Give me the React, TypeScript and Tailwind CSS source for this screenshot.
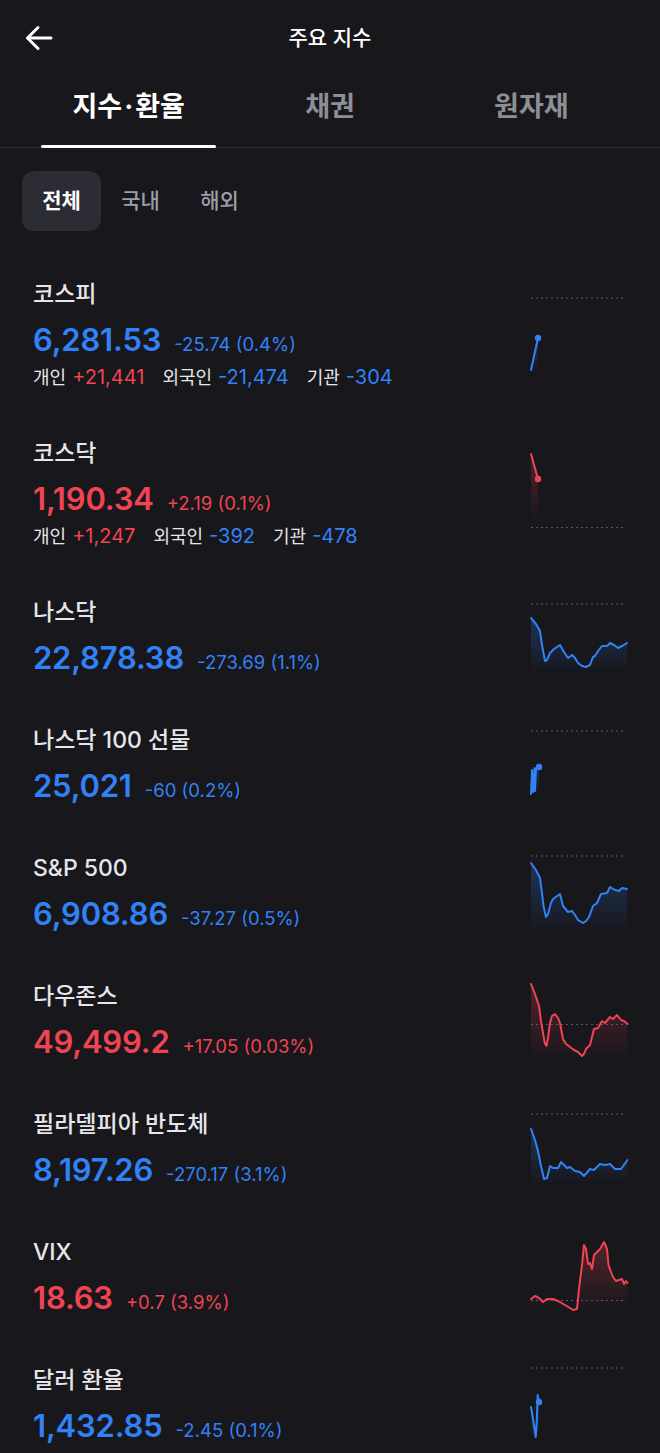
import React from "react";

const BLUE = "#3182f6";
const RED = "#f04452";

type Chart = {
  dash: number;
  pts: number[][];
  dot?: boolean;
  bottom: number;
};

type Item = {
  name: string;
  price: string;
  change: string;
  up: boolean;
  sub?: [string, string, boolean][];
  chart: Chart;
};

const items: Item[] = [
  {
    name: "코스피",
    price: "6,281.53",
    change: "-25.74 (0.4%)",
    up: false,
    sub: [
      ["개인", "+21,441", true],
      ["외국인", "-21,474", false],
      ["기관", "-304", false],
    ],
    chart: { dash: 19, pts: [[3, 91], [10, 59]], dot: true, bottom: 92 },
  },
  {
    name: "코스닥",
    price: "1,190.34",
    change: "+2.19 (0.1%)",
    up: true,
    sub: [
      ["개인", "+1,247", true],
      ["외국인", "-392", false],
      ["기관", "-478", false],
    ],
    chart: { dash: 89.5, pts: [[3, 16], [10, 41]], dot: true, bottom: 84 },
  },
  {
    name: "나스닥",
    price: "22,878.38",
    change: "-273.69 (1.1%)",
    up: false,
    chart: {
      dash: 7,
      pts: [[3, 21], [8, 27], [12, 34], [14, 48], [17, 64], [19, 63], [22, 56], [26, 52], [32, 48], [36, 55], [40, 61], [44, 58], [47, 61], [50, 66], [54, 69], [58, 70], [62, 68], [65, 60], [67, 59], [70, 54], [74, 49], [79, 49], [82, 46], [86, 48], [90, 51], [94, 49], [99, 46]],
      bottom: 76,
    },
  },
  {
    name: "나스닥 100 선물",
    price: "25,021",
    change: "-60 (0.2%)",
    up: false,
    chart: {
      dash: 6,
      pts: [[3, 69], [4, 45], [5, 67], [6.5, 43], [7, 66], [8, 44], [9.5, 42], [11, 42]],
      dot: true,
      bottom: 70,
    },
  },
  {
    name: "S&P 500",
    price: "6,908.86",
    change: "-37.27 (0.5%)",
    up: false,
    chart: {
      dash: 3,
      pts: [[3, 10], [8, 17], [12, 25], [14, 40], [15.5, 53], [18, 64], [20, 61], [23, 50], [25, 46], [32, 41], [35, 53], [40, 59], [44, 58], [47, 62], [50, 67], [55, 70], [58, 68], [61, 64], [65, 53], [69, 50], [73, 41], [79, 40], [82, 34], [87, 37], [91, 38], [94, 35], [99, 36]],
      bottom: 80,
    },
  },
  {
    name: "다우존스",
    price: "49,499.2",
    change: "+17.05 (0.03%)",
    up: true,
    chart: {
      dash: 43.5,
      pts: [[3, 3], [7, 13], [11, 25], [13, 40], [15.5, 55], [17, 63], [18.5, 65], [20, 57], [22, 42], [24, 35], [27, 33], [30, 37], [32, 42], [35, 58], [38, 63], [42, 66], [46, 69], [50, 71], [54, 75], [56, 73], [58, 68], [62, 64], [64, 56], [66, 48], [70, 47], [74, 40], [77, 42], [82, 36], [85, 38], [89, 34], [93, 39], [96, 40], [99.5, 43]],
      bottom: 80,
    },
  },
  {
    name: "필라델피아 반도체",
    price: "8,197.26",
    change: "-270.17 (3.1%)",
    up: false,
    chart: {
      dash: 5,
      pts: [[3, 20], [7, 31], [10, 42], [13, 57], [16, 70], [19, 69], [22, 57], [25, 59], [30, 59], [33, 53], [39, 59], [42, 58], [47, 62], [52, 63], [56, 67], [62, 60], [66, 61], [72, 55], [77, 56], [82, 55], [87, 60], [93, 60], [99.5, 51]],
      bottom: 76,
    },
  },
  {
    name: "VIX",
    price: "18.63",
    change: "+0.7 (3.9%)",
    up: true,
    chart: {
      dash: 63.5,
      pts: [[3, 62], [7, 59], [11, 61], [15, 65], [19, 62], [25, 62], [30, 64], [37, 68], [42, 71], [45, 73], [49, 72], [51, 52], [54, 28], [56, 8], [58, 12], [60, 27], [62, 26], [64, 32], [66, 18], [69, 15], [72, 12], [76, 5], [79, 12], [80.5, 28], [83, 35], [85, 40], [88, 44], [91, 43], [94, 42], [96, 47], [98, 44], [99.5, 46]],
      bottom: 74,
    },
  },
  {
    name: "달러 환율",
    price: "1,432.85",
    change: "-2.45 (0.1%)",
    up: false,
    chart: {
      dash: 3,
      pts: [[3, 42], [5.5, 57], [7.7, 72], [8.7, 57], [9.7, 30], [11, 37]],
      dot: true,
      bottom: 74,
    },
  },
];

function Spark({ chart, color, id, h }: { chart: Chart; color: string; id: string; h: number }) {
  const line = chart.pts.map((p) => p.join(",")).join(" ");
  const first = chart.pts[0];
  const last = chart.pts[chart.pts.length - 1];
  const fill = `M${first[0]},${chart.bottom} L${line.replace(/ /g, " L")} L${last[0]},${chart.bottom} Z`;
  return (
    <svg width="100" height={h} viewBox={`0 0 100 ${h}`} overflow="visible" className="shrink-0 self-start">
      <defs>
        <linearGradient id={id} x1="0" y1="0" x2="0" y2="1">
          <stop offset="0%" stopColor={color} stopOpacity="0.28" />
          <stop offset="100%" stopColor={color} stopOpacity="0" />
        </linearGradient>
      </defs>
      <line x1="3" x2="98" y1={chart.dash} y2={chart.dash} stroke="#5a5a62" strokeWidth="1" strokeDasharray="2 3" />
      <path d={fill} fill={`url(#${id})`} />
      <polyline points={line} fill="none" stroke={color} strokeWidth="2" strokeLinejoin="round" strokeLinecap="round" />
      {chart.dot && <circle cx={last[0]} cy={last[1]} r="3.2" fill={color} />}
    </svg>
  );
}

function Row({ item, idx }: { item: Item; idx: number }) {
  const c = item.up ? RED : BLUE;
  return (
    <div className={`flex pl-[33px] pr-[32px] pt-[23px] ${item.sub ? "pb-[25px]" : "pb-[24px]"}`}>
      <div className="flex-1 min-w-0">
        <div className="text-[23px] leading-[30px] font-medium text-[#e6e6ea]">{item.name}</div>
        <div className="mt-[11px] flex items-baseline gap-[13px] h-[40px]">
          <span className="text-[31px] leading-[40px] font-semibold tracking-[-0.2px]" style={{ color: c }}>
            {item.price}
          </span>
          <span className="text-[18.5px] leading-[40px]" style={{ color: c }}>
            {item.change}
          </span>
        </div>
        {item.sub && (
          <div className="mt-[5px] flex items-baseline gap-[18px] leading-[24px]">
            {item.sub.map(([k, v, up]) => (
              <span key={k} className="flex items-baseline gap-[6px]">
                <span className="text-[18px] text-[#e6e6ea]">{k}</span>
                <span className={`text-[20px] ${up ? "text-[#f04452]" : "text-[#3182f6]"}`}>{v}</span>
              </span>
            ))}
          </div>
        )}
      </div>
      <Spark chart={item.chart} color={c} id={`g${idx}`} h={item.sub ? 110 : 81} />
    </div>
  );
}

export default function App() {
  return (
    <div className="min-h-screen w-full bg-[#17171c] text-white font-[Inter,'Noto_Sans_CJK_KR',sans-serif]">
      {/* top bar */}
      <div className="h-[76px] grid grid-cols-[1fr_auto_1fr] items-center">
        <div className="pl-[25px] flex items-center">
          <svg width="28" height="26" viewBox="0 0 28 26" fill="none" stroke="white" strokeWidth="3" strokeLinecap="round" strokeLinejoin="round">
            <path d="M26 13H3" />
            <path d="M13 2.5L2.5 13L13 23.5" />
          </svg>
        </div>
        <div className="text-[21px] font-medium">주요 지수</div>
        <div />
      </div>

      {/* tabs */}
      <div className="grid grid-cols-3 gap-[26px] px-[41px] border-b border-[#2a2a30]">
        {[["지수", "환율"], ["채권"], ["원자재"]].map((t, i) => (
          <div key={i} className="relative h-[71px] pb-[9px] flex items-center justify-center">
            <span className={`text-[27px] font-bold ${i === 0 ? "text-white" : "text-[#8e8e95]"}`}>
              {t.length > 1 ? (
                <>
                  {t[0]}
                  <span className="mx-[2px]">·</span>
                  {t[1]}
                </>
              ) : (
                t[0]
              )}
            </span>
            {i === 0 && <div className="absolute left-0 right-0 bottom-[-1px] h-[3px] rounded-full bg-white" />}
          </div>
        ))}
      </div>

      {/* chips */}
      <div className="mt-[23px] px-[22px] flex">
        {["전체", "국내", "해외"].map((t, i) => (
          <div
            key={t}
            className={`w-[79px] h-[60px] rounded-[12px] flex items-center justify-center text-[21px] ${
              i === 0 ? "bg-[#2c2c34] text-white font-bold" : "text-[#9e9ea6] font-medium"
            }`}
          >
            {t}
          </div>
        ))}
      </div>

      {/* list */}
      <div className="mt-[25px]">
        {items.map((it, i) => (
          <Row key={it.name} item={it} idx={i} />
        ))}
      </div>
    </div>
  );
}
